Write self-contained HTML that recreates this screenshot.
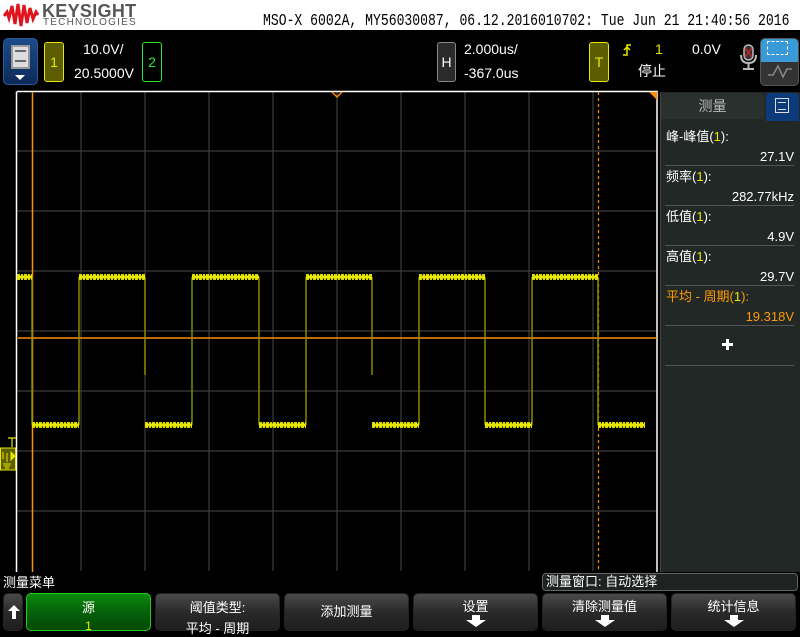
<!DOCTYPE html>
<html><head><meta charset="utf-8"><style>
*{margin:0;padding:0;box-sizing:border-box}
body{width:800px;height:632px;background:#000;position:relative;overflow:hidden;font-family:"Liberation Sans","Noto Sans CJK SC",sans-serif;color:#fff}
.a{position:absolute}
.t{font-size:13px;line-height:15px;white-space:nowrap}
.btn{position:absolute;top:593px;height:38px;border-radius:5px;background:linear-gradient(#4a4a4a,#2a2a2a 50%,#1e1e1e);border:1px solid #222;text-align:center;font-size:13px;color:#fff}
.arr{position:absolute;left:50%;margin-left:-11px;bottom:3px;width:22px;height:12px}
</style></head><body>
<div class="a" style="left:0;top:0;width:800px;height:30px;background:#fff"></div>
<svg class="a" style="left:3px;top:2px" width="36" height="26" viewBox="0 0 36 26"><path d="M1,14 L4,10 L6,16 L9,4 L12,22 L15,2 L18,24 L21,3 L24,21 L27,6 L30,17 L33,10 L35,13" stroke="#e0141e" stroke-width="3" fill="none"/></svg>
<div class="a" style="left:42px;top:1px;font-size:18px;font-weight:bold;color:#575757;letter-spacing:0.3px">KEYSIGHT</div>
<div class="a" style="left:43px;top:17px;font-size:10px;color:#575757;letter-spacing:1.2px">TECHNOLOGIES</div>
<div class="a" style="left:263px;top:11px;font-family:'Liberation Mono',monospace;font-size:13.1px;line-height:16px;color:#000;white-space:nowrap;transform:scaleY(1.25);transform-origin:0 0">MSO-X 6002A, MY56030087, 06.12.2016010702: Tue Jun 21 21:40:56 2016</div>

<div class="a" style="left:3px;top:38px;width:35px;height:47px;border-radius:5px;background:linear-gradient(#1c4a8a,#0c2a58);border:1px solid #2a5a9a"></div>
<div class="a" style="left:11px;top:45px;width:19px;height:24px;background:#ddd;border:2px solid #999"><div style="margin:3px 2px;height:12px;border-top:2px solid #667;border-bottom:2px solid #667"></div></div>
<div class="a" style="left:15px;top:75px;border-left:5px solid transparent;border-right:5px solid transparent;border-top:5px solid #fff"></div>
<div class="a" style="left:44px;top:42px;width:20px;height:40px;background:#5c5c00;border:1px solid #e8e800;border-radius:3px;color:#e8e800;font-size:14px;text-align:center;line-height:38px">1</div>
<div class="a t" style="left:83px;top:42px;font-size:14px">10.0V/</div>
<div class="a t" style="left:74px;top:66px;font-size:14px">20.5000V</div>
<div class="a" style="left:142px;top:42px;width:20px;height:40px;border:1px solid #2ce82c;border-radius:3px;color:#2ce82c;font-size:14px;text-align:center;line-height:38px">2</div>
<div class="a" style="left:437px;top:42px;width:19px;height:40px;background:#2a2a2a;border:1px solid #888;border-radius:3px;font-size:14px;text-align:center;line-height:38px">H</div>
<div class="a t" style="left:464px;top:42px;font-size:14px">2.000us/</div>
<div class="a t" style="left:464px;top:66px;font-size:14px">-367.0us</div>
<div class="a" style="left:589px;top:42px;width:20px;height:40px;background:#5c5c00;border:1px solid #e8e800;border-radius:3px;color:#e8e800;font-size:14px;text-align:center;line-height:38px">T</div>
<svg class="a" style="left:622px;top:43px" width="10" height="14"><path d="M1,12 H5 V2 H9 M2,7 L5,4 L8,7" stroke="#e8e800" stroke-width="1.5" fill="none"/></svg>
<div class="a t" style="left:655px;top:42px;font-size:14px;color:#e8e800">1</div>
<div class="a t" style="left:692px;top:42px;font-size:14px">0.0V</div>
<div class="a t" style="left:638px;top:64px;font-size:14px">停止</div>
<svg class="a" style="left:739px;top:43px" width="20" height="30"><rect x="5" y="2" width="9" height="15" rx="4.5" fill="#333" stroke="#bbb" stroke-width="1.5"/><path d="M6,5 L13,14 M13,5 L6,14" stroke="#e02020" stroke-width="1.2"/><path d="M2,12 Q2,20 9.5,20 Q17,20 17,12 M9.5,20 V25 M4,26 H15" stroke="#bbb" stroke-width="2" fill="none"/></svg>
<div class="a" style="left:760px;top:38px;width:39px;height:48px;border-radius:5px;overflow:hidden;background:#333;border:1px solid #555">
<div style="height:23px;background:#3a9ad8"></div></div>
<div class="a" style="left:767px;top:41px;width:21px;height:14px;border:1.5px dashed #fff"></div>
<svg class="a" style="left:765px;top:62px" width="30" height="20"><path d="M3,13 L8,13 L13,4 L18,15 L22,7 L27,7" stroke="#888" stroke-width="1.5" fill="none"/></svg>

<svg class="a" style="left:0;top:90px" width="660" height="482">
<g stroke="#3c3c3c" stroke-width="1.2">
<path d="M81,2V481M145,2V481M209,2V481M273,2V481M337,2V481M401,2V481M465,2V481M529,2V481M593,2V481"/>
<path d="M17,61H656M17,121H656M17,181H656M17,241H656M17,301H656M17,361H656M17,421H656"/>
</g>
<path d="M17,1.5H657V482M16.5,1.5V482" stroke="#fff" stroke-width="1.5" fill="none"/>
<path d="M32.5,2V482" stroke="#ff8c00" stroke-width="1.5"/>
<path d="M598.5,2V482" stroke="#ff8c00" stroke-width="1.2" stroke-dasharray="3,3"/>
<path d="M18,248H657" stroke="#ff8c00" stroke-width="1.5"/>
<path d="M332,2L337,7L342,2" stroke="#ff8c00" stroke-width="1.5" fill="none"/>
<path d="M649,2H657V10Z" fill="#ff8c00"/>
<g stroke="#8a8a00" stroke-width="1.5" fill="none">
<path d="M32,187V335M79,187V335M145,187V285M192,187V335M259,187V335M306,187V335M372,187V285M419,187V335M485,187V335M532,187V335M598,187V335"/>
</g>
<g stroke="#d8d800" stroke-width="6" fill="none" stroke-dasharray="3,1,2,1">
<path d="M17,187H32M79,187H145M192,187H259M306,187H372M419,187H485M532,187H598"/>
<path d="M32,335H79M145,335H192M259,335H306M372,335H419M485,335H532M598,335H645"/>
</g>
<g stroke="#e8e800" stroke-width="3" fill="none">
<path d="M17,187H32M79,187H145M192,187H259M306,187H372M419,187H485M532,187H598"/>
<path d="M32,335H79M145,335H192M259,335H306M372,335H419M485,335H532M598,335H645"/>
</g>
</svg>
<svg class="a" style="left:0;top:437px" width="17" height="34"><path d="M8,1H16M12,1V10" stroke="#e8e800" stroke-width="1.2"/><rect x="0.5" y="11" width="15" height="22" fill="#5c5c00" stroke="#e8e800"/><path d="M3,15V22M7,16V25M3,27H11M4,29H10M5,31H9M11,15L15,19L11,23Z" stroke="#e8e800" fill="#e8e800" stroke-width="1"/></svg>

<div class="a" style="left:660px;top:92px;width:140px;height:480px;background:#222826;border-left:1px solid #444"></div>
<div class="a" style="left:661px;top:93px;width:103px;height:26px;background:#2a302e;border-radius:4px 4px 0 0;font-size:14px;color:#bbb;text-align:center;line-height:26px">测量</div>
<div class="a" style="left:766px;top:93px;width:33px;height:28px;background:#0c3a7a;border-radius:4px 4px 0 0"></div>
<div class="a" style="left:775px;top:98px;width:14px;height:15px;border:1.5px solid #ddd;padding:2px"><div style="height:8px;border-top:1px solid #ddd;border-bottom:1px solid #ddd;margin-top:1px"></div></div>
<div class="a t" style="left:666px;top:129px">峰-峰值(<span style="color:#e8e800">1</span>):</div>
<div class="a t" style="left:666px;top:149px;width:128px;text-align:right">27.1V</div>
<div class="a" style="left:665px;top:165px;width:129px;height:1px;background:#555"></div>
<div class="a t" style="left:666px;top:169px">频率(<span style="color:#e8e800">1</span>):</div>
<div class="a t" style="left:666px;top:189px;width:128px;text-align:right">282.77kHz</div>
<div class="a" style="left:665px;top:205px;width:129px;height:1px;background:#555"></div>
<div class="a t" style="left:666px;top:209px">低值(<span style="color:#e8e800">1</span>):</div>
<div class="a t" style="left:666px;top:229px;width:128px;text-align:right">4.9V</div>
<div class="a" style="left:665px;top:245px;width:129px;height:1px;background:#555"></div>
<div class="a t" style="left:666px;top:249px">高值(<span style="color:#e8e800">1</span>):</div>
<div class="a t" style="left:666px;top:269px;width:128px;text-align:right">29.7V</div>
<div class="a" style="left:665px;top:285px;width:129px;height:1px;background:#555"></div>
<div class="a t" style="left:666px;top:289px;color:#ff9a00">平均 - 周期(<span style="color:#e8e800">1</span>):</div>
<div class="a t" style="left:666px;top:309px;width:128px;text-align:right;color:#ff9a00">19.318V</div>
<div class="a" style="left:665px;top:325px;width:129px;height:1px;background:#555"></div>
<div class="a" style="left:722px;top:343px;width:11px;height:3px;background:#fff"></div>
<div class="a" style="left:726px;top:339px;width:3px;height:11px;background:#fff"></div>
<div class="a" style="left:665px;top:365px;width:129px;height:1px;background:#555"></div>

<div class="a t" style="left:3px;top:575px">测量菜单</div>
<div class="a t" style="left:542px;top:573px;width:256px;height:18px;background:#1e2220;border:1px solid #666;border-radius:4px;padding-left:3px;line-height:16px">测量窗口: 自动选择</div>
<div class="btn" style="left:3px;width:20px"><svg style="position:absolute;left:4px;top:11px" width="12" height="14"><path d="M6,0L12,6H8V14H4V6H0Z" fill="#fff"/></svg></div>
<div class="btn" style="left:26px;width:125px;background:linear-gradient(#0a8a0a,#05600a 50%,#044a06);border:1px solid #2c2"><div style="margin-top:3px">源</div><div style="color:#e8e800;margin-top:3px;font-size:12px">1</div></div>
<div class="btn" style="left:155px;width:125px"><div style="margin-top:3px">阈值类型:</div><div style="margin-top:2px">平均 - 周期</div></div>
<div class="btn" style="left:284px;width:125px;line-height:36px">添加测量</div>
<div class="btn" style="left:413px;width:125px"><div style="margin-top:2px">设置</div><svg class="arr" viewBox="0 0 22 12"><path d="M7,0H15V5H21L11,12L1,5H7Z" fill="#fff"/></svg></div>
<div class="btn" style="left:542px;width:125px"><div style="margin-top:2px">清除测量值</div><svg class="arr" viewBox="0 0 22 12"><path d="M7,0H15V5H21L11,12L1,5H7Z" fill="#fff"/></svg></div>
<div class="btn" style="left:671px;width:125px"><div style="margin-top:2px">统计信息</div><svg class="arr" viewBox="0 0 22 12"><path d="M7,0H15V5H21L11,12L1,5H7Z" fill="#fff"/></svg></div>
</body></html>
